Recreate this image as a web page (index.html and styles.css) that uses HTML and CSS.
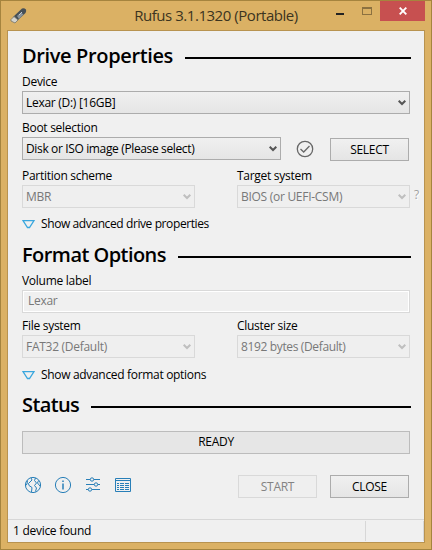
FILE: index.html
```html
<!DOCTYPE html>
<html lang="en">
<head>
<meta charset="utf-8">
<title>Rufus 3.1.1320 (Portable)</title>
<link rel="stylesheet" href="styles.css">
</head>
<body>
<div class="window">
  <header class="titlebar">
    <svg class="app-icon" width="18" height="18" viewBox="0 0 18 18"><path d="M3 10L12 1.500Q14 .5 16 2.500Q16.500 4 15.500 6L7 14L3 12Z" fill="#465057"/><path d="M7 9L11 5.500L13.500 7.500L9 12Z" fill="#89939a"/><path d="M9 8L12 5" stroke="#c4cbd0"/><path d="M4 9.500L8 13L5 16L1 14L1 12.500Z" fill="#d3d3cd" stroke="#777568" stroke-width=".8"/></svg>
    <h1 class="title">Rufus 3.1.1320 (Portable)</h1>
    <div class="controls">
      <span class="minimize"></span><span class="maximize"></span>
      <span class="close"><svg width="8" height="8" viewBox="0 0 8 8"><path d="M.7 .7L7.300 7.300M7.300 .7L.7 7.300" stroke="#fff" stroke-width="1.900"/></svg></span>
    </div>
  </header>
  <main class="client">
    <h2 class="heading"><span>Drive Properties</span></h2>
    <div class="label">Device</div>
    <div class="select"><span>Lexar (D:) [16GB]</span><svg class="chevron" width="8" height="6" viewBox="0 0 8 6"><path d="M.7 .7L4 4L7.300 .7"/></svg></div>
    <div class="label boot-label">Boot selection</div>
    <div class="boot-row">
      <div class="select"><span class="boot-value">Disk or ISO image (Please select)</span><svg class="chevron" width="8" height="6" viewBox="0 0 8 6"><path d="M.7 .7L4 4L7.300 .7"/></svg></div>
      <svg class="check" width="18" height="18" viewBox="0 0 18 18"><circle cx="9" cy="9" r="7.700"/><path d="M4.500 9L7.700 12L13.500 6"/></svg>
      <div class="button">SELECT</div>
    </div>
    <div class="pair scheme">
      <div class="field"><div class="label">Partition scheme</div><div class="select disabled"><span>MBR</span><svg class="chevron" width="8" height="6" viewBox="0 0 8 6"><path d="M.7 .7L4 4L7.300 .7"/></svg></div></div>
      <div class="field"><div class="label">Target system</div><div class="select disabled"><span>BIOS (or UEFI-CSM)</span><svg class="chevron" width="8" height="6" viewBox="0 0 8 6"><path d="M.7 .7L4 4L7.300 .7"/></svg></div><span class="help">?</span></div>
    </div>
    <div class="advanced drive-toggle"><svg width="13" height="9" viewBox="0 0 13 9"><path d="M1 .7H12L7.500 7.500H5.500Z"/></svg><span>Show advanced drive properties</span></div>
    <h2 class="heading format-heading"><span>Format Options</span></h2>
    <div class="label">Volume label</div>
    <div class="textbox">Lexar</div>
    <div class="pair files">
      <div class="field"><div class="label">File system</div><div class="select disabled"><span>FAT32 (Default)</span><svg class="chevron" width="8" height="6" viewBox="0 0 8 6"><path d="M.7 .7L4 4L7.300 .7"/></svg></div></div>
      <div class="field"><div class="label">Cluster size</div><div class="select disabled"><span class="cluster-value">8192 bytes (Default)</span><svg class="chevron" width="8" height="6" viewBox="0 0 8 6"><path d="M.7 .7L4 4L7.300 .7"/></svg></div></div>
    </div>
    <div class="advanced format-toggle"><svg width="13" height="9" viewBox="0 0 13 9"><path d="M1 .7H12L7.500 7.500H5.500Z"/></svg><span>Show advanced format options</span></div>
    <h2 class="heading status-heading"><span>Status</span></h2>
    <div class="progress">READY</div>
    <div class="actions">
      <div class="tools">
        <svg width="18" height="18" viewBox="0 0 18 18"><circle cx="9" cy="9" r="7.600"/><path d="M7 1.800L8 4L4.500 7.500L5 9.500L8 11.500L7.500 16M3.500 4.500L3 8L1.800 9.500M11.500 2L10.500 4.500L12.500 7L10.500 9.500L12.500 12L11.500 15.500M14.500 4.500L13.500 7L16 10"/></svg>
        <svg width="18" height="18" viewBox="0 0 18 18"><circle cx="9" cy="9" r="7.600"/><path d="M9 7.500V13.500M9 4.500V6" stroke-width="1.500"/></svg>
        <svg width="18" height="18" viewBox="0 0 18 18"><path d="M2 3.500H6.200M9.800 3.500H16M2 8.500H10.200M13.800 8.500H16M2 13.500H4.200M7.800 13.500H16"/><circle cx="8" cy="3.500" r="1.700"/><circle cx="12" cy="8.500" r="1.700"/><circle cx="6" cy="13.500" r="1.700"/></svg>
        <svg width="18" height="18" viewBox="0 0 18 18"><path d="M1.500 2.500H16.500V15.500H1.500ZM1 4.500H17M3 7.500H5M6 7.500H10M11 7.500H15M3 9.500H5M6 9.500H10M11 9.500H15M3 11.500H5M6 11.500H10M11 11.500H15M3 13.500H5M6 13.500H10M11 13.500H15"/></svg>
      </div>
      <div class="button off">START</div>
      <div class="button">CLOSE</div>
    </div>
    <footer class="statusbar"><span>1 device found</span><span class="grip"></span></footer>
  </main>
</div>
</body>
</html>
```
FILE: styles.css
```css
* { box-sizing: border-box; }
body { margin: 0; font: 12px/16px "Open Sans", "Noto Sans", sans-serif; letter-spacing: -.28px; color: #000; white-space: nowrap; }
h1, h2 { margin: 0; font-weight: 400; }
svg { display: block; flex: none; fill: none; }
.window { width: 432px; height: 550px; background: #dbb164; border: 1px solid #a5843e; padding: 0 6px 6px; }
.titlebar { height: 29px; position: relative; display: flex; justify-content: center; }
.title { font-size: 15px; line-height: 29px; color: #3c3420; letter-spacing: -.46px; }
.app-icon { position: absolute; left: 3px; top: 6px; }
.controls { position: absolute; right: 0; top: 0; display: flex; }
.minimize { width: 8px; height: 2px; margin: 12px 18px 0 0; background: #222; }
.maximize { width: 10px; height: 8px; margin: 6px 8px 0 0; border: 1px solid #8c7140; border-top-width: 2px; }
.close { width: 45px; height: 20px; background: #c75050; display: flex; align-items: center; justify-content: center; }
.client { height: 513px; border: 1px solid #b89350; background: #f0f0f0; padding: 11px 0 0 14px; display: flex; flex-direction: column; align-items: flex-start; }
.heading { width: 389px; height: 30px; display: flex; align-items: center; gap: 12px; margin-top: 1px; font: 600 20px/30px "Open Sans", sans-serif; letter-spacing: -.36px; }
.heading span { padding-bottom: 4px; }
.heading::after { content: ""; flex: 1; height: 2px; background: #000; }
.label { height: 19px; line-height: 20px; }
.heading + .label { margin-top: -1px; }
.select { width: 388px; height: 23px; border: 1px solid #acacac; background: linear-gradient(#f0f0f0, #e5e5e5); display: flex; align-items: center; justify-content: space-between; padding: 0 3px; line-height: 21px; }
.chevron { stroke: #555; stroke-width: 2; margin-top: 1px; }
.disabled { background: #efefef; border-color: #d9d9d9; color: #787878; }
.disabled .chevron { stroke: #bfbfbf; }
.boot-label { margin-top: 4px; }
.boot-value, .cluster-value { letter-spacing: -.36px; }
.boot-row { display: flex; height: 24px; }
.boot-row .select { width: 259px; }
.check { margin: 3px 16px 0 15px; stroke: #686868; stroke-width: 1.300; }
.button { width: 79px; height: 23px; border: 1px solid #acacac; background: linear-gradient(#f0f0f0, #e5e5e5); text-align: center; line-height: 21px; }
.boot-row .button { margin-top: 1px; }
.off { background: #efefef; border-color: #d9d9d9; color: #838383; }
.pair { display: flex; gap: 42px; position: relative; }
.scheme { margin-top: 5px; }
.field .select { width: 173px; }
.help { position: absolute; left: 392px; top: 21px; color: #a0a0a0; text-shadow: 1px 1px #fff; }
.advanced { height: 20px; margin-top: 6px; display: flex; align-items: center; gap: 6px; line-height: 20px; }
.advanced svg { stroke: #3aa7de; stroke-width: 1.300; }
.drive-toggle { letter-spacing: -.4px; }
.format-toggle { margin-top: 7px; letter-spacing: -.32px; }
.format-heading { margin-top: 8px; letter-spacing: -.55px; }
.status-heading { margin-top: 7px; letter-spacing: -.6px; }
.textbox { width: 388px; height: 23px; border: 1px solid #d9d9d9; box-shadow: inset 0 0 0 1px #fff; padding-left: 5px; line-height: 20px; color: #787878; }
.files { margin-top: 3px; }
.progress { width: 388px; height: 23px; margin-top: 9px; border: 1px solid #bcbcbc; background: #e6e6e6; text-align: center; line-height: 20px; }
.actions { height: 23px; margin-top: 21px; display: flex; gap: 13px; }
.tools { width: 203px; display: flex; gap: 12px; padding: 1px 0 0 2px; stroke: #287fb8; stroke-width: 1; }
.statusbar { width: 416px; height: 22px; margin: 21px 0 0 -14px; border-top: 1px solid #d7d7d7; display: flex; justify-content: space-between; padding-left: 5px; line-height: 22px; }
.grip { width: 59px; height: 20px; margin: 1px 0 0; border: solid #d7d7d7; border-width: 0 1px; }
```
